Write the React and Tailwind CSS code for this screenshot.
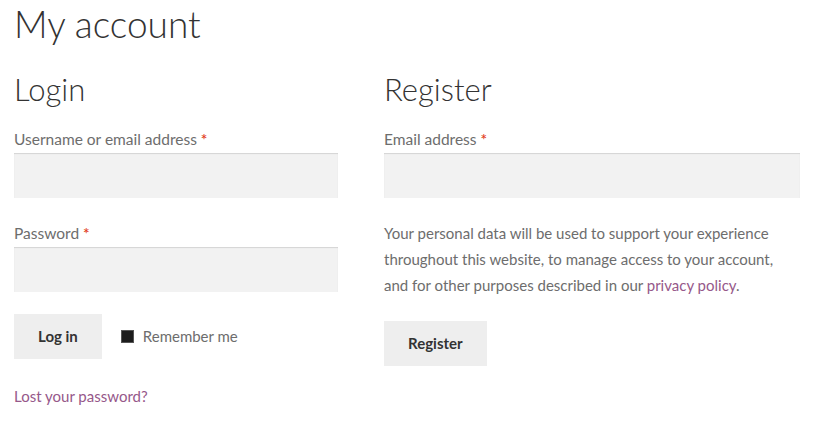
import React from "react";

function Label({ children }) {
  return (
    <label className="block text-[15.5px] leading-[26px] text-[#6d6d6d] mb-[1px]">
      {children} <span className="text-[#e2401c] font-semibold">*</span>
    </label>
  );
}

function Field({ label }) {
  return (
    <div className="mb-[22px]">
      <Label>{label}</Label>
      <input
        type="text"
        className="block w-full h-[45px] bg-[#f2f2f2] shadow-[inset_0_1px_1px_rgba(0,0,0,0.125)] outline-none px-3"
      />
    </div>
  );
}

export default function App() {
  return (
    <div className="pl-[14px] pr-[16px] text-[#6d6d6d] font-['Lato','Liberation_Sans',sans-serif] bg-white min-h-[425px]">
      <h1 className="text-[37px] leading-[48px] font-light text-[#333]">My account</h1>
      <div className="flex justify-between mt-[21px]">
        <div className="w-[324px]">
          <h2 className="text-[31px] leading-[40px] font-light text-[#333] mb-[17px]">Login</h2>
          <Field label="Username or email address" />
          <Field label="Password" />
          <div className="flex items-center mt-[1px]">
            <button className="h-[45px] px-[24px] bg-[#eeeeee] text-[#333] font-bold text-[15px]">Log in</button>
            <label className="flex items-center ml-[19px] text-[15px]">
              <span className="w-[13px] h-[13px] bg-[#1c1c1c] border border-[#555] mr-[9px]" />
              Remember me
            </label>
          </div>
          <a className="block mt-[26px] text-[15px] text-[#96588a]">Lost your password?</a>
        </div>
        <div className="w-[416px]">
          <h2 className="text-[31px] leading-[40px] font-light text-[#333] mb-[17px]">Register</h2>
          <Field label="Email address" />
          <p className="text-[15px] leading-[26px] text-[#6d6d6d] mt-[2px]">
            Your personal data will be used to support your experience throughout this website, to manage access to your account, and for other purposes described in our{" "}
            <a className="text-[#96588a]">privacy policy</a>.
          </p>
          <button className="mt-[23px] h-[45px] px-[24px] bg-[#eeeeee] text-[#333] font-bold text-[15px]">Register</button>
        </div>
      </div>
    </div>
  );
}
